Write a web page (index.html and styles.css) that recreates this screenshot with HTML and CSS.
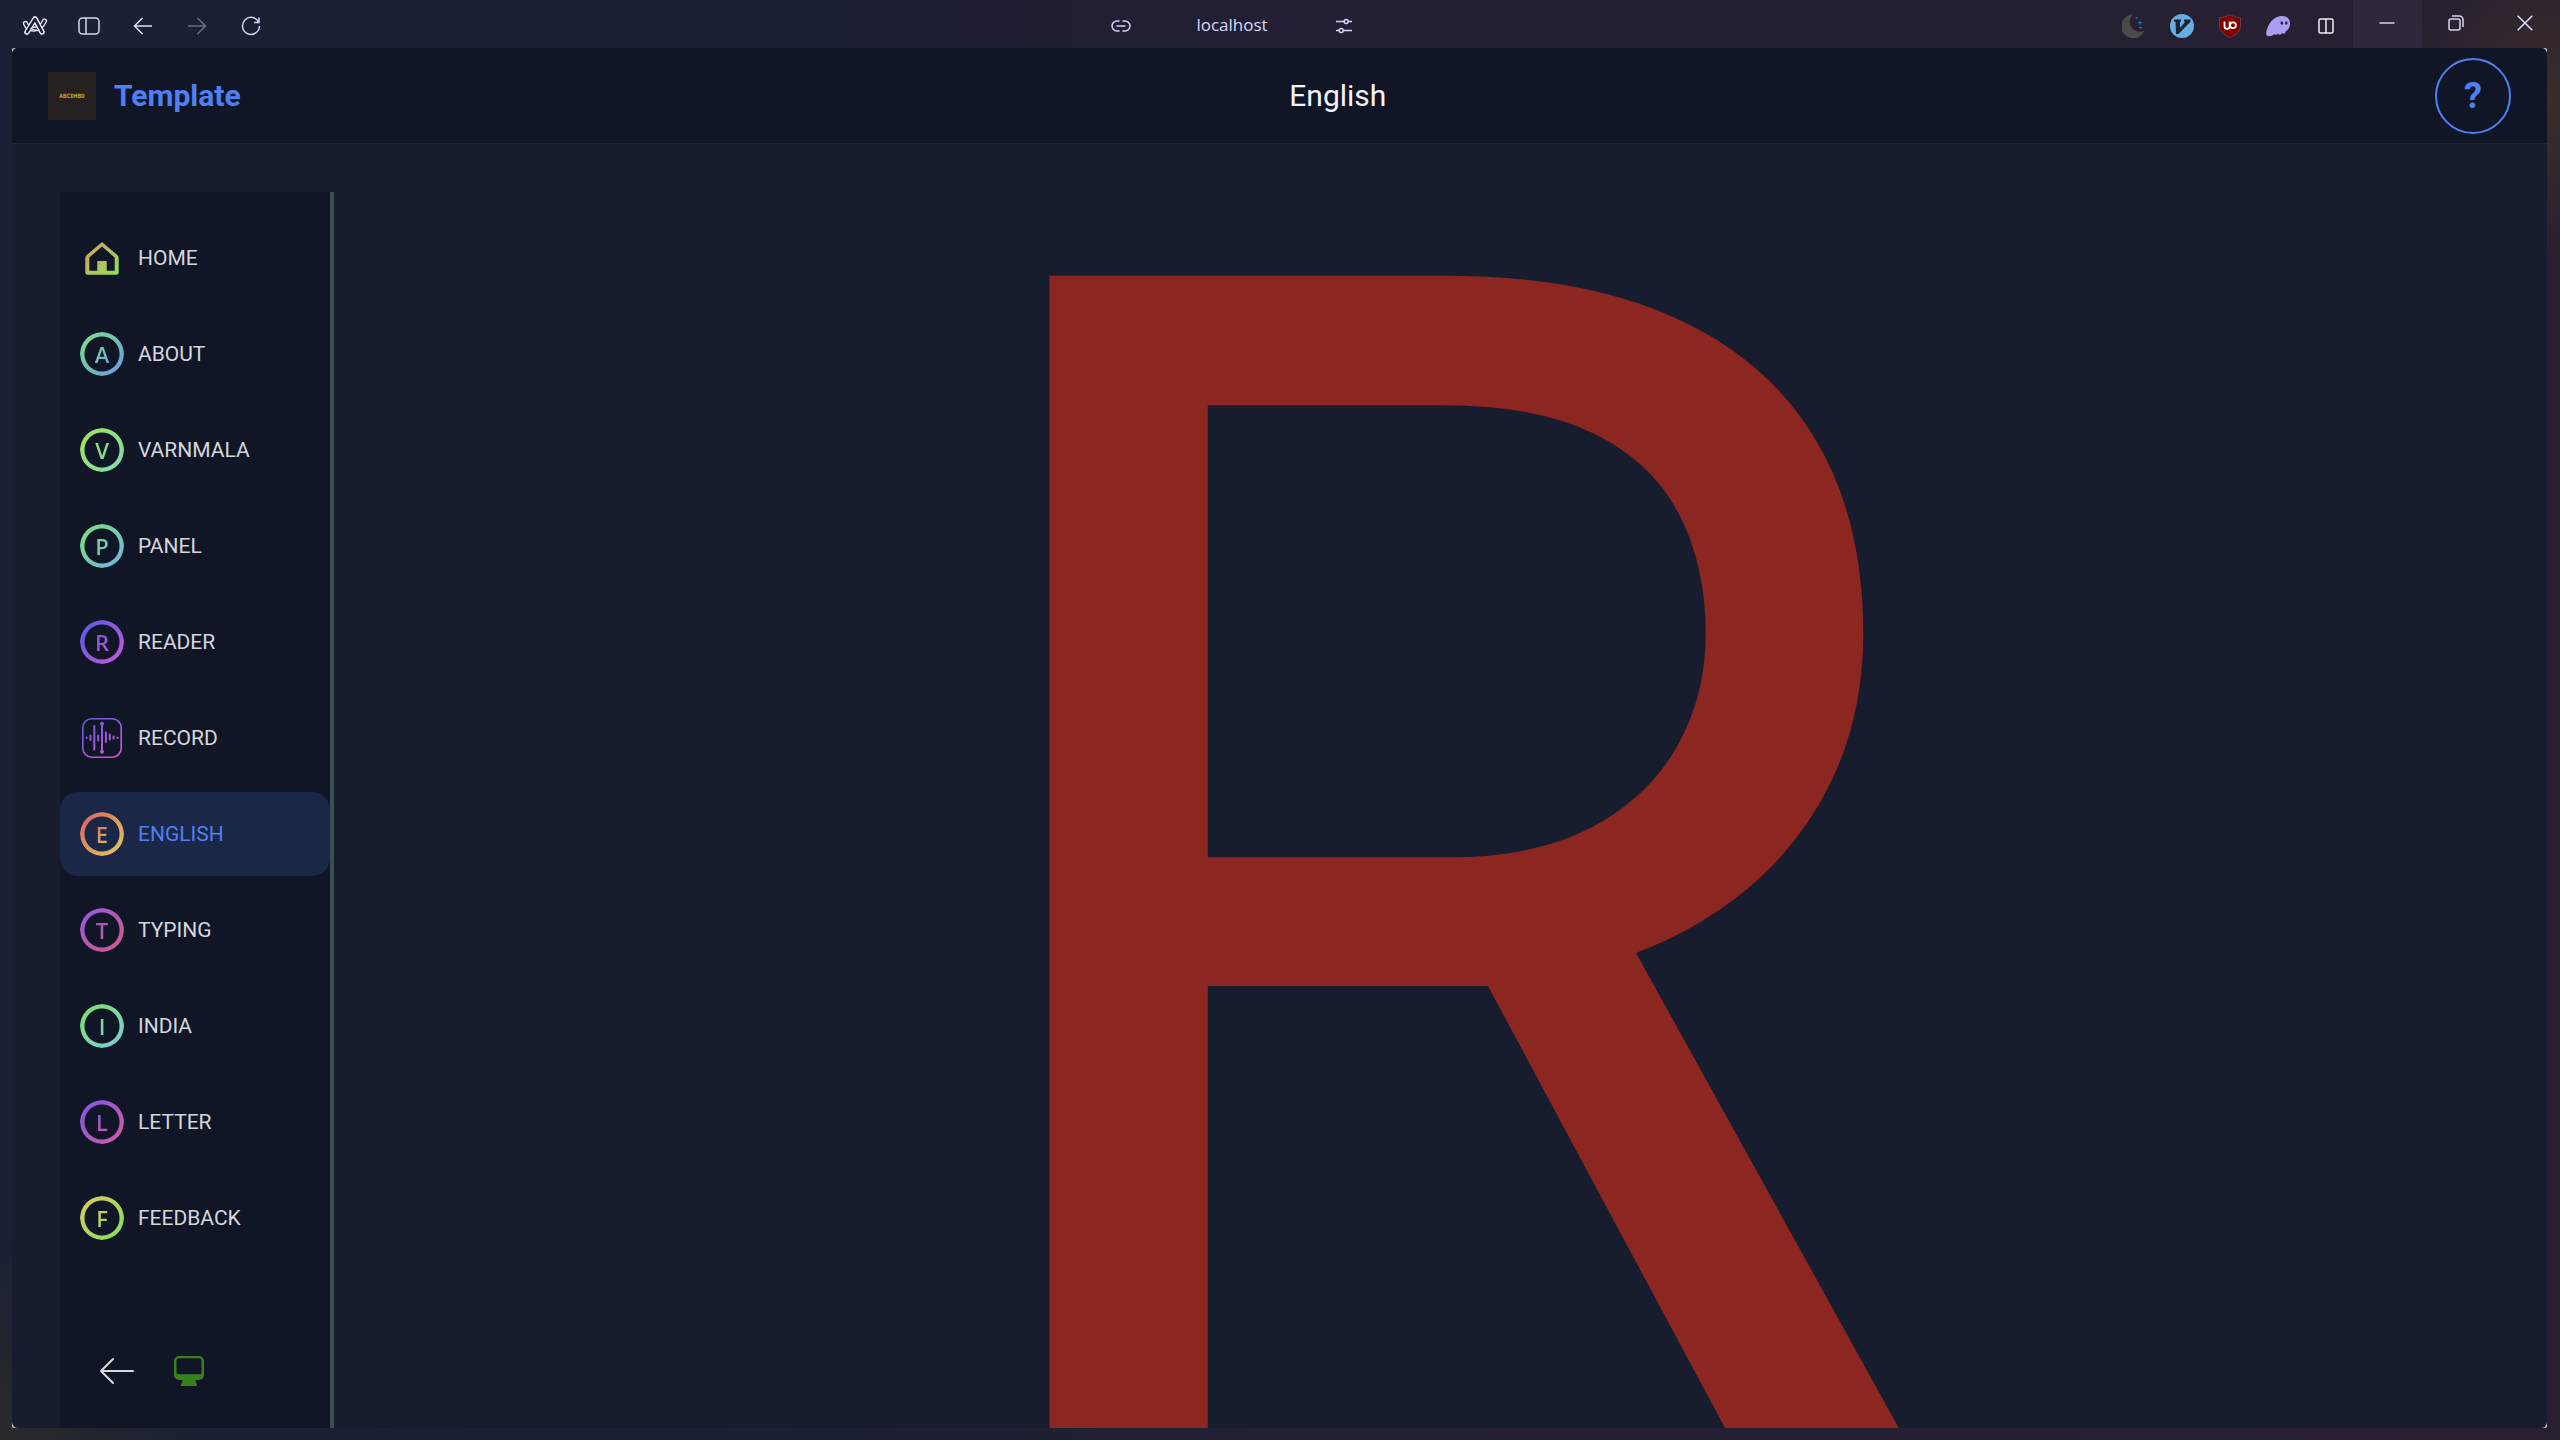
FILE: index.html
```html
<!DOCTYPE html>
<html lang="en">
<head>
<meta charset="utf-8">
<title>English</title>
<link rel="stylesheet" href="styles.css">
</head>
<body>
<div class="window">
  <div class="titlebar">
    <nav class="browser-nav" aria-label="Browser">
      <button type="button" class="tool" aria-label="Menu">
        <svg width="26" height="22" viewBox="0 0 26 22" fill="none" stroke-linecap="round" stroke-linejoin="round">
          <g stroke="#eceaff" stroke-width="5.2"><path d="M5 17 13 4 20 17"/><path d="M3.5 8.5C6 15 17 18 22.500 6"/></g>
          <g stroke="#1b2035" stroke-width="2.600"><path d="M3.500 8.500C6 15 17 18 22.500 6"/></g>
          <path d="M5 17 13 4 20 17" stroke="#eceaff" stroke-width="5.200"/>
          <path d="M5 17 13 4 20 17" stroke="#1b2035" stroke-width="2.600"/>
          <path d="M9 13.500q3 2 6 1.500" stroke="#eceaff" stroke-width="1.300"/>
        </svg>
      </button>
      <button type="button" class="tool" aria-label="Toggle sidebar">
        <svg width="22" height="18" viewBox="0 0 22 18" fill="none" stroke="#d5d2f5" stroke-width="1.500"><rect x="1" y="1" width="20" height="16" rx="3.500"/><path d="M8 1v16"/></svg>
      </button>
      <button type="button" class="tool" aria-label="Back">
        <svg width="20" height="18" viewBox="0 0 20 18" fill="none" stroke="#e2dfff" stroke-width="1.500"><path d="M19 9H2M9.500 1 1.500 9l8 8"/></svg>
      </button>
      <button type="button" class="tool tool--off" aria-label="Forward">
        <svg width="20" height="18" viewBox="0 0 20 18" fill="none" stroke="#e2dfff" stroke-width="1.500"><path d="M1 9h17M10.500 1l8 8-8 8"/></svg>
      </button>
      <button type="button" class="tool" aria-label="Reload">
        <svg width="20" height="20" viewBox="0 0 20 20" fill="none" stroke="#d5d2f5" stroke-width="1.500"><path d="M17.800 6.500A8.500 8.500 0 1 0 18.500 10M18 1.500v5h-5"/></svg>
      </button>
    </nav>
    <div class="address">
      <button type="button" class="ext" aria-label="Copy link">
        <svg width="20" height="14" viewBox="0 0 20 14" fill="none" stroke="#d5d2f5" stroke-width="1.500" stroke-linecap="round"><path d="M8 2H6a5 5 0 0 0 0 10h2M12 2h2a5 5 0 0 1 0 10h-2M6 7h8"/></svg>
      </button>
      <button type="button" class="address__host">localhost</button>
      <button type="button" class="ext" aria-label="Site settings">
        <svg width="18" height="16" viewBox="0 0 18 16" fill="none" stroke="#d5d2f5" stroke-width="1.500"><path d="M1 3.500h8M13.500 3.500H17M1 12.500h3M8.500 12.500H17"/><circle cx="11.200" cy="3.500" r="2"/><circle cx="6.200" cy="12.500" r="2"/></svg>
      </button>
    </div>
    <div class="extensions">
      <button type="button" class="ext" aria-label="Dark mode">
        <svg width="24" height="24" viewBox="0 0 24 24"><path d="M11 .300A10 10 0 0 0 22.500 16.500 12 12 0 1 1 11 .300Z" fill="#4b4a49"/><g fill="#0b74bf"><path d="m18 6 .700 2 2 .700-2 .700-.700 2-.700-2-2-.700 2-.700z"/><circle cx="14.500" cy="4" r="1"/><path d="M17 13h3v1.300h-3z"/></g></svg>
      </button>
      <button type="button" class="ext" aria-label="Vimium">
        <svg width="24" height="24" viewBox="0 0 24 24"><circle cx="12" cy="12" r="12" fill="#64aee3"/><path d="M4 5.500h7v2.200H9.800l.4 6 5-6H14V5.500h6.500v2.200L8.500 20H6L5.500 7.700H4Z" fill="#1d2235"/></svg>
      </button>
      <button type="button" class="ext" aria-label="uBlock Origin">
        <svg width="24" height="24" viewBox="0 0 24 24"><path d="M12 .500c3 2 6 2.700 10.500 3V12c0 5-4 8.500-10.500 11.700C5.500 20.500 1.500 17 1.500 12V3.500C6 3.200 9 2.500 12 .500Z" fill="#820000" stroke="#6f5058" stroke-width=".7"/><path d="M6.500 7.500v4.700a2.600 2.600 0 0 0 5.200 0V7.500" fill="none" stroke="#fff" stroke-width="1.800"/><circle cx="15" cy="11.300" r="2.900" fill="none" stroke="#fff" stroke-width="1.800"/></svg>
      </button>
      <button type="button" class="ext" aria-label="Ghostery">
        <svg width="26" height="22" viewBox="0 0 26 22"><path d="M17 1c5 0 8 3 8 7.500 0 3.500-1.500 6.500-4.500 8 0 2-1.500 3-3.500 1.500-1 2-3 2.500-4 .5-1.500 1.500-3 1.500-3.500.5C7.500 21 4.500 21.500 2.500 21 .500 20 1 16.500 2.500 13 5 6 10 1 17 1Z" fill="#ab9df2"/><g fill="#241f33"><ellipse cx="16.800" cy="8" rx="1.300" ry="1.700"/><ellipse cx="21.300" cy="8" rx="1.200" ry="1.700"/></g></svg>
      </button>
      <button type="button" class="ext" aria-label="Split view">
        <svg width="16" height="16" viewBox="0 0 16 16" fill="none" stroke="#f3f1f8" stroke-width="1.500"><rect x="1" y="1" width="14" height="14" rx="1.500"/><path d="M8 1v14"/></svg>
      </button>
    </div>
    <div class="controls">
      <button type="button" class="control control--hover" aria-label="Minimize">
        <svg width="16" height="16" viewBox="0 0 16 16" stroke="#d9d4f2" stroke-width="1.500"><path d="M.500 8h15"/></svg>
      </button>
      <button type="button" class="control" aria-label="Restore">
        <svg width="16" height="16" viewBox="0 0 16 16" fill="none" stroke="#d9d4f2" stroke-width="1.500"><rect x="1" y="4" width="11" height="11" rx="2"/><path d="M4 1h7.500A3.500 3.500 0 0 1 15 4.500V12"/></svg>
      </button>
      <button type="button" class="control" aria-label="Close">
        <svg width="16" height="16" viewBox="0 0 16 16" stroke="#e2dfff" stroke-width="1.500"><path d="m.700.700 14.600 14.600M15.300.700.700 15.300"/></svg>
      </button>
    </div>
  </div>

  <div class="frame">
    <div class="page">
      <header class="header">
        <a class="brand" href="#">
          <span class="brand__logo">ABCDHBD</span>
          <span class="brand__name">Template</span>
        </a>
        <h1 class="header__title">English</h1>
        <button type="button" class="help">?</button>
      </header>
      <div class="body">
        <aside class="sidebar">
          <nav class="menu">
            <a class="menu__item" href="#">
              <svg class="menu__icon" viewBox="0 0 44 44"><defs><linearGradient id="g-home" x1="0" y1="0" x2="1" y2="1"><stop offset="0" stop-color="#d99c5c"/><stop offset="1" stop-color="#8fe060"/></linearGradient></defs><path fill="url(#g-home)" fill-rule="evenodd" d="M22 6 37.500 19.300c.8.700 1.200 1.500 1.200 2.500v14.700c0 1.400-.8 2.200-2.200 2.200h-29c-1.400 0-2.200-.8-2.200-2.200V21.800c0-1 .4-1.800 1.200-2.500ZM22 10.500 9.300 21.500v13.200H17.300V25h9.400v9.700h8V21.500Z"/></svg>
              <span>HOME</span>
            </a>
            <a class="menu__item" href="#"><span class="badge badge--about"><span class="badge__letter">A</span></span><span>ABOUT</span></a>
            <a class="menu__item" href="#"><span class="badge badge--varnmala"><span class="badge__letter">V</span></span><span>VARNMALA</span></a>
            <a class="menu__item" href="#"><span class="badge badge--panel"><span class="badge__letter">P</span></span><span>PANEL</span></a>
            <a class="menu__item" href="#"><span class="badge badge--reader"><span class="badge__letter">R</span></span><span>READER</span></a>
            <a class="menu__item" href="#">
              <svg class="menu__icon" viewBox="0 0 44 44"><defs><linearGradient id="g-record" gradientUnits="userSpaceOnUse" x1="2" y1="2" x2="42" y2="42"><stop offset="0" stop-color="#5f5ae0"/><stop offset="1" stop-color="#d958cf"/></linearGradient></defs><g fill="none" stroke="url(#g-record)" stroke-linecap="round"><rect x="2.800" y="2.800" width="38.400" height="38.400" rx="9" stroke-width="1.600"/><path stroke-width="2" d="M6.500 21.500v.5M10.500 19.500v4.500M14.300 10v23.500M18.200 19.500v5M22 8v28M25.900 16.500v9.500M29.800 18.500v5M33.600 20.500v2M37.500 21.500v.5"/></g><circle cx="22" cy="7.800" r="2" fill="url(#g-record)"/><circle cx="22" cy="35.800" r="2" fill="url(#g-record)"/></svg>
              <span>RECORD</span>
            </a>
            <a class="menu__item menu__item--active" href="#" aria-current="page"><span class="badge badge--english"><span class="badge__letter">E</span></span><span>ENGLISH</span></a>
            <a class="menu__item" href="#"><span class="badge badge--typing"><span class="badge__letter">T</span></span><span>TYPING</span></a>
            <a class="menu__item" href="#"><span class="badge badge--india"><span class="badge__letter">I</span></span><span>INDIA</span></a>
            <a class="menu__item" href="#"><span class="badge badge--letter"><span class="badge__letter">L</span></span><span>LETTER</span></a>
            <a class="menu__item" href="#"><span class="badge badge--feedback"><span class="badge__letter">F</span></span><span>FEEDBACK</span></a>
          </nav>
          <div class="sidebar__foot">
            <button type="button" class="foot-button" aria-label="Collapse sidebar">
              <svg width="36" height="28" viewBox="0 0 36 28" fill="none" stroke="#d8d9de" stroke-width="2" stroke-linecap="round" stroke-linejoin="round"><path d="M34 14H2M14 2 2 14l12 12"/></svg>
            </button>
            <button type="button" class="foot-button" aria-label="System theme">
              <svg width="30" height="30" viewBox="0 0 30 30" fill="#37801c"><path fill-rule="evenodd" d="M5 0h20a5 5 0 0 1 5 5v14a5 5 0 0 1-5 5h-3.500v1.500L23 28.500V30H7v-1.500l1.500-3V24H5a5 5 0 0 1-5-5V5a5 5 0 0 1 5-5Zm0 2.300A2.500 2.500 0 0 0 2.500 5v11.500A1.800 1.800 0 0 0 4.300 18.300h21.400a1.800 1.800 0 0 0 1.800-1.800V5A2.500 2.500 0 0 0 25 2.300Z"/></svg>
            </button>
          </div>
        </aside>
        <main class="stage">
          <div class="stage__letter">R</div>
        </main>
      </div>
    </div>
  </div>
</div>
</body>
</html>
```
FILE: styles.css
```css
* { box-sizing: border-box; }

body {
  margin: 0;
  font-family: Roboto, "Liberation Sans", sans-serif;
}

button {
  display: flex;
  align-items: center;
  justify-content: center;
  padding: 0;
  border: 0;
  background: none;
  font: inherit;
  color: inherit;
}

a { color: inherit; text-decoration: none; }

svg { display: block; flex: none; }

.window {
  display: flex;
  flex-direction: column;
  height: 100vh;
  overflow: hidden;
  padding: 0 13px 12px 12px;
  background:
    radial-gradient(circle at 100% 7%, #3a2e2a 0, transparent 160px),
    radial-gradient(circle at 0 100%, #2a2a2a 0, transparent 200px),
    linear-gradient(90deg, #1a2035 0, #1b2034 30%, #231f34 50%, #261f33 80%, #281f30 100%);
}

.titlebar {
  display: flex;
  flex: none;
  height: 48px;
  margin: 0 -13px 0 -12px;
  padding-left: 8px;
}

.browser-nav {
  display: flex;
  margin-right: 76px;
}

.tool { width: 54px; height: 52px; }
.tool--off { opacity: 0.4; }

.address {
  display: flex;
  flex: 1;
  justify-content: center;
}

.address__host {
  width: 175px;
  height: 48px;
  font-family: "Open Sans", sans-serif;
  font-size: 17px;
  color: #dad7f7;
}

.ext { width: 48px; height: 52px; }

.extensions { display: flex; }

.controls { display: flex; margin-left: 3px; }

.control { width: 69px; height: 48px; padding: 0 2px 2px 0; }
.control--hover { background: #30273a; }

.frame {
  flex: 1;
  min-height: 0;
  border-radius: 2px;
  background: linear-gradient(90deg, #d8dadf, #171d2e 10px, #171d2e calc(100% - 10px), #d8dadf);
}

.page {
  display: flex;
  flex-direction: column;
  height: 100%;
  overflow: hidden;
  border-radius: 6px;
  background: #171d2e;
}

.header {
  display: flex;
  flex: none;
  align-items: center;
  justify-content: space-between;
  height: 96px;
  padding: 0 36px;
  border-bottom: 1px solid #212739;
  background: #111627;
}

.brand {
  display: flex;
  align-items: center;
  gap: 18px;
}

.brand__logo {
  display: flex;
  align-items: center;
  justify-content: center;
  width: 48px;
  height: 48px;
  background: #252120;
  color: #c9a82c;
  font-family: "DejaVu Sans Mono", monospace;
  font-size: 6px;
  font-weight: 700;
}

.brand__name {
  color: #4f80f2;
  font-size: 30px;
  font-weight: 700;
}

.header__title {
  margin: 0;
  color: #f3f4f6;
  font-size: 30px;
  font-weight: 400;
}

.help {
  width: 76px;
  height: 76px;
  border: 2px solid #4f80f2;
  border-radius: 50%;
  color: #4f80f2;
  font-size: 36px;
  font-weight: 700;
}

.body {
  display: flex;
  flex: 1;
  gap: 24px;
  min-height: 0;
  padding: 48px 48px 0;
}

.sidebar {
  display: flex;
  flex: none;
  flex-direction: column;
  justify-content: space-between;
  width: 274px;
  padding: 24px 0;
  border-right: 4px solid #394f50;
  background: #111627;
}

.menu {
  display: flex;
  flex-direction: column;
  gap: 12px;
}

.menu__item {
  display: flex;
  align-items: center;
  gap: 14px;
  height: 84px;
  padding: 0 20px;
  border-radius: 18px;
  color: #d5d6db;
  font-size: 21px;
}

.menu__item--active {
  background: #1b2746;
  color: #4f80f2;
}

.menu__icon { width: 44px; height: 44px; }

.badge {
  position: relative;
  display: flex;
  flex: none;
  align-items: center;
  justify-content: center;
  width: 44px;
  height: 44px;
}

/* gradient ring, hollow so that the row colour shows through */
.badge::before {
  content: "";
  position: absolute;
  inset: 0;
  border-radius: 50%;
  background: linear-gradient(135deg, var(--from), var(--to));
  mask: radial-gradient(circle closest-side, transparent 17px, #000 18px);
}

.badge__letter {
  background: linear-gradient(135deg, var(--from), var(--to));
  background-clip: text;
  color: transparent;
  font-family: "Open Sans", sans-serif;
  font-size: 22px;
  font-weight: 600;
}

.badge--about { --from: #7ee48a; --to: #639ae0; }
.badge--varnmala { --from: #9ee352; --to: #7edcb6; }
.badge--panel { --from: #7ee37a; --to: #6eb2e2; }
.badge--reader { --from: #4f5ce2; --to: #cc58d8; }
.badge--english { --from: #d95c62; --to: #e0d05c; }
.badge--typing { --from: #9058e4; --to: #d65a82; }
.badge--india { --from: #7ee360; --to: #78cce0; }
.badge--letter { --from: #7858e4; --to: #d85aa0; }
.badge--feedback { --from: #e2c85c; --to: #7ee060; }

.sidebar__foot {
  display: flex;
  gap: 6px;
  padding-left: 24px;
}

.foot-button { width: 66px; height: 66px; }

.stage {
  flex: 1;
  min-width: 0;
  overflow: hidden;
  text-align: center;
}

.stage__letter {
  color: #8c2620;
  font-size: 1680px;
  line-height: 1408px;
}
```
